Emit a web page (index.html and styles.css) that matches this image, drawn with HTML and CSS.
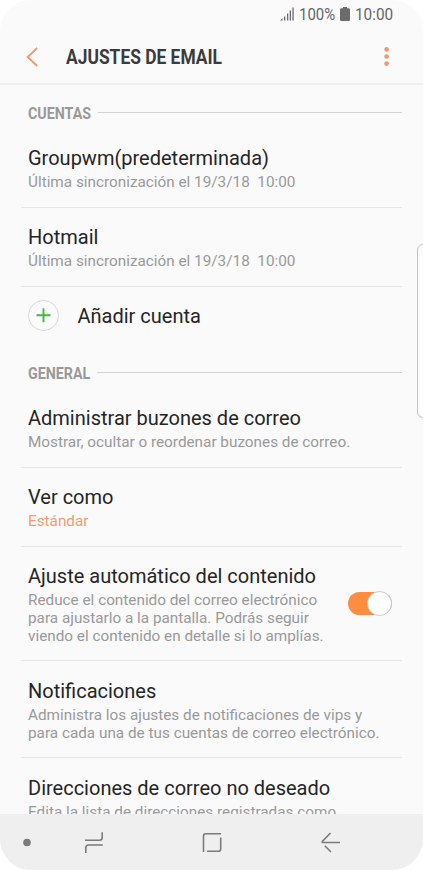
FILE: index.html
```
<!DOCTYPE html>
<html lang="es">
<head>
  <meta charset="UTF-8">
  <title>Ajustes de email</title>
  <meta name="viewport" content="width=device-width, initial-scale=1.0">
  <link rel="stylesheet" href="styles.css">
</head>
<body>
  <div class="screen">
    <div class="status">
      <svg class="signal" width="14" height="14" viewBox="0 0 14 14">
        <path d="M0 13.5 L2.500 11 V13.5 Z M4 9.5h1.300v4H4z M7 6.5h1.300v7H7z M9.700 3.5H11v10H9.700z M12.400 0.5h1.300v13h-1.300z" fill="#6b6b6b"/>
      </svg>
      <span class="percent"><span class="narrow">100%</span></span>
      <svg class="battery" width="10" height="14" viewBox="0 0 10 14">
        <path d="M3 0h4v1.3h1.8q1.2 0 1.2 1.2v10.3q0 1.2-1.2 1.2H1.2Q0 14 0 12.800V2.500Q0 1.300 1.200 1.300H3z" fill="#6b6b6b"/>
      </svg>
      <span class="clock"><span class="narrow">10:00</span></span>
    </div>

    <header class="header">
      <svg class="back" width="14" height="20" viewBox="0 0 14 20">
        <path d="M12.200 1 L2.700 10 L12.200 19" fill="none" stroke="#f39a73" stroke-width="1.900"/>
      </svg>
      <h1><span class="narrow">AJUSTES DE EMAIL</span></h1>
      <svg class="more" width="6" height="20" viewBox="0 0 6 20">
        <g fill="#ee9670">
          <circle cx="2.600" cy="2.400" r="2.300"/>
          <circle cx="2.600" cy="9.500" r="2.300"/>
          <circle cx="2.600" cy="16.600" r="2.300"/>
        </g>
      </svg>
    </header>

    <main class="content">
      <h2 class="section accounts"><span class="label"><span class="narrow">CUENTAS</span></span></h2>
      <div class="row first">
        <div class="title">Groupwm(predeterminada)</div>
        <div class="sub">Última sincronización el 19/3/18&nbsp; 10:00</div>
      </div>
      <div class="row">
        <div class="title">Hotmail</div>
        <div class="sub">Última sincronización el 19/3/18&nbsp; 10:00</div>
      </div>
      <div class="add">
        <svg width="32" height="32" viewBox="0 0 32 32">
          <circle cx="15.500" cy="15.500" r="15" fill="#fcfcfc" stroke="#d9d9d9"/>
          <path d="M8.500 15.200h14M15.500 8.200v14" stroke="#43b93b" stroke-width="1.900"/>
        </svg>
        <div class="title">Añadir cuenta</div>
      </div>

      <h2 class="section general"><span class="label"><span class="narrow">GENERAL</span></span></h2>
      <div class="row first">
        <div class="title">Administrar buzones de correo</div>
        <div class="sub">Mostrar, ocultar o reordenar buzones de correo.</div>
      </div>
      <div class="row">
        <div class="title">Ver como</div>
        <div class="sub accent">Estándar</div>
      </div>
      <div class="row with-switch">
        <div>
          <div class="title">Ajuste automático del contenido</div>
          <div class="sub">Reduce el contenido del correo electrónico<br>para ajustarlo a la pantalla. Podrás seguir<br>viendo el contenido en detalle si lo amplías.</div>
        </div>
        <div class="switch"><div class="knob"></div></div>
      </div>
      <div class="row">
        <div class="title">Notificaciones</div>
        <div class="sub">Administra los ajustes de notificaciones de vips y<br>para cada una de tus cuentas de correo electrónico.</div>
      </div>
      <div class="row">
        <div class="title">Direcciones de correo no deseado</div>
        <div class="sub">Edita la lista de direcciones registradas como</div>
      </div>
    </main>

    <nav class="navbar">
      <svg width="423" height="56" viewBox="0 0 423 56">
        <g fill="none" stroke="#7b7b7b" stroke-width="1.600">
          <circle cx="27" cy="28.500" r="3.800" fill="#7b7b7b" stroke="none"/>
          <path d="M85 26.300H99.500Q102.200 26.300 102.200 23.600V18.300"/>
          <path d="M102.800 31H88.500Q85.800 31 85.800 33.700V39"/>
          <path d="M203.500 38V22Q203.500 19.700 205.800 19.700H221"/>
          <path d="M220.700 23.500V35Q220.700 37.300 218.400 37.300H207"/>
          <path d="M330.500 19L322.300 27.400Q322 28.500 323 28.500H340M324.800 31.800L331 38"/>
        </g>
      </svg>
    </nav>
    <div class="edge-handle"></div>
  </div>
</body>
</html>
```
FILE: styles.css
```
* {
  box-sizing: border-box;
}
body {
  margin: 0;
  background: #fff;
  font-family: Roboto, sans-serif;
  color: #252525;
}
.screen {
  position: relative;
  width: 423px;
  height: 870px;
  display: flex;
  flex-direction: column;
  overflow: hidden;
  background: #fafafa;
  border-radius: 31px;
}

/* Roboto squeezed to its condensed width */
.narrow {
  display: inline-block;
  transform-origin: left center;
  white-space: nowrap;
}

.status {
  display: flex;
  align-items: center;
  height: 28px;
  padding-left: 279.5px;
  font-size: 17px;
  color: #666;
}
.percent {
  width: 36px;
  margin-left: 5px;
}
.percent .narrow {
  transform: scaleX(.88);
}
.battery {
  margin-left: 5px;
}
.clock {
  width: 40px;
  margin-left: 5px;
}
.clock .narrow {
  transform: scaleX(.9);
}

.header {
  display: flex;
  align-items: center;
  height: 57px;
  padding: 3px 33px 0 25px;
  border-bottom: 2px solid #eee;
  flex-shrink: 0;
}
.header h1 {
  flex: 1;
  margin: 0 0 0 27px;
  font-size: 20px;
  line-height: 24px;
  font-weight: 700;
  color: #3b3b3b;
}
.header .narrow {
  transform: scaleX(.87);
}

.content {
  flex: 1;
  min-height: 0;
  overflow: hidden;
  padding: 0 21px;
}
.section {
  display: flex;
  align-items: center;
  height: 20px;
  margin: 0;
  padding-left: 7px;
  font-size: 16px;
  font-weight: 700;
  color: #999;
}
.section::after {
  content: "";
  flex: 1;
  height: 1px;
  margin-top: -2px;
  background: #d3d3d3;
}
.accounts {
  margin-top: 18px;
}
.accounts .label {
  width: 70px;
}
.general {
  margin-top: 18px;
}
.general .label {
  width: 69px;
}
.section .narrow {
  transform: scaleX(.89);
}

.row {
  padding: 17.4px 7px 15.3px;
  border-bottom: 1px solid #e6e6e6;
}
.row.first {
  padding-top: 22.8px;
  padding-bottom: 16.1px;
}
.title {
  font-size: 20px;
  line-height: 24px;
  white-space: nowrap;
}
.sub {
  margin-top: 3px;
  font-size: 15.3px;
  line-height: 18px;
  color: #999;
  white-space: nowrap;
}
.accent {
  color: #f39a73;
}

.add {
  display: flex;
  align-items: center;
  height: 58.6px;
  padding-left: 7px;
}
.add .title {
  margin-left: 17.5px;
}

.with-switch {
  display: flex;
  align-items: center;
  justify-content: space-between;
}
.switch {
  display: flex;
  justify-content: flex-end;
  align-items: center;
  width: 44px;
  height: 23px;
  margin: 0 3px 3px 0;
  border-radius: 12px;
  background: #ff8d40;
}
.knob {
  width: 25px;
  height: 25px;
  flex-shrink: 0;
  border-radius: 50%;
  background: #fff;
  border: 1px solid #ccc;
}

.navbar {
  height: 56px;
  background: #efefef;
  flex-shrink: 0;
}
.navbar svg {
  display: block;
}

.edge-handle {
  position: absolute;
  top: 244px;
  right: -7px;
  width: 13px;
  height: 174px;
  border: 1px solid #c2c2c2;
  border-radius: 6px;
  background: #fdfdfd;
}
```
